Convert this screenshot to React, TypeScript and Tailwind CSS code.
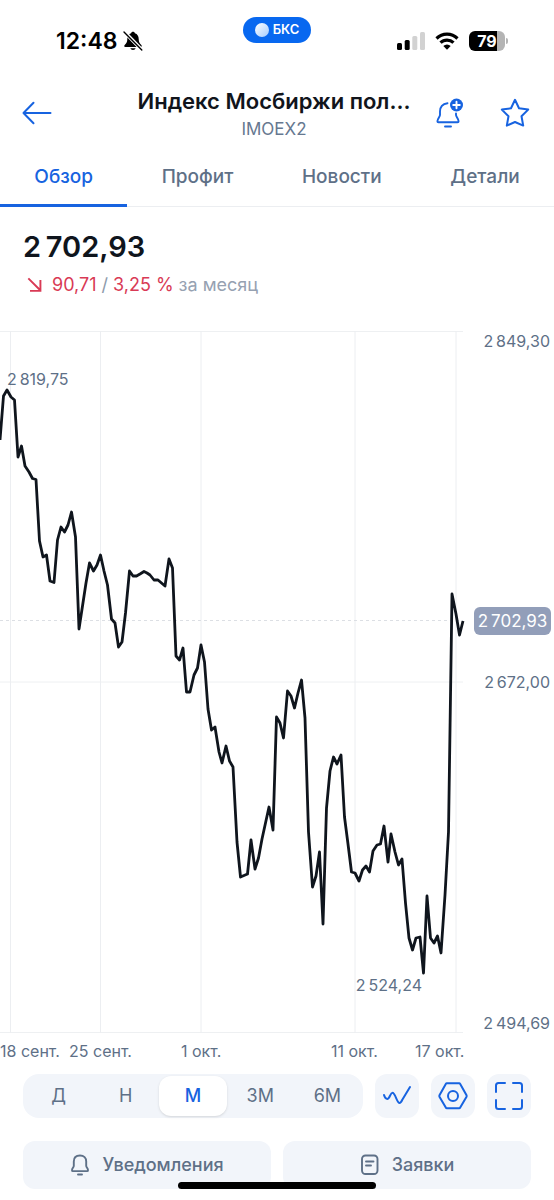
import { useState } from "react";
import { clsx } from "clsx";

const tabs = ["Обзор", "Профит", "Новости", "Детали"];
const ranges = ["Д", "Н", "М", "3М", "6М"];
const gridX = [10.5, 100.5, 201, 355, 456];

const points: [number, number][] = [
    [0, 109], [3.5, 65], [7, 59], [11, 66], [14.5, 69], [18, 126], [21.5, 115], [25, 135], [29, 141], [32.5, 147.5],
    [36, 148.5], [39.5, 210], [43, 226], [46.5, 224], [50, 250], [54, 251.5], [57.5, 209], [61, 196], [64.5, 201],
    [68, 194], [71.5, 181], [75.5, 206], [79, 298], [82.5, 275], [86, 252], [89.5, 232], [93.5, 240], [97, 234],
    [100.5, 224], [104, 240], [107.5, 254], [111.5, 288], [115, 292], [118.5, 316], [122, 311], [125.5, 282],
    [129.5, 240], [133, 245], [136.5, 245], [140, 243], [144, 240.5], [147, 242], [150, 244], [154, 249], [158, 249],
    [165, 255], [169, 228], [172.5, 237], [176, 325], [179.5, 329], [183, 317], [186.5, 361], [190, 361], [194, 344],
    [197.5, 337], [201, 314], [204.5, 331], [208, 378], [211.5, 399], [215, 396], [219, 421], [222, 432], [226, 415],
    [229.5, 430], [233, 436], [237, 511], [240.5, 546], [247.5, 543], [251, 509], [255, 538], [258.5, 527],
    [262, 508], [265.5, 492], [269, 476], [273, 499], [276.5, 386], [280, 392], [283.5, 407], [287.5, 360],
    [291, 365], [294.5, 377], [298, 362], [301.5, 349], [305, 387], [308.5, 501], [312.5, 556], [316, 545],
    [319.5, 521], [323, 593], [326.5, 477], [330, 440], [333.5, 426], [337, 433], [341, 424], [344.5, 486],
    [348, 513], [351.5, 541], [355, 542], [359, 550], [362.5, 539], [366, 535], [369.5, 541], [373, 520], [377, 514],
    [380.5, 513], [384, 495], [388, 531], [391, 503], [395, 521], [398.5, 534], [402, 528], [405.5, 572], [409, 607],
    [412.5, 619], [416, 607], [420, 606], [423.5, 642], [427, 565], [430.5, 607], [434, 612], [437.5, 605],
    [441, 622], [445, 564], [448.5, 501], [452, 263], [456, 283], [459.5, 304], [463, 290],
];

function StatusBar() {
    return (
        <div className="grid grid-cols-3 px-8 pt-[17px] text-black">
            <div className="flex items-center gap-[6px] pl-6 h-12">
                <span className="text-[23px] leading-6 font-semibold">12:48</span>
                <svg viewBox="0 0 20 20" className="w-5 h-5 shrink-0" aria-hidden="true">
                    <path d="M10 .8c-1 0-1.700.6-1.900 1.400C5.500 3 4.300 5.200 4.300 8c0 3.200-.9 4.300-2.600 6-.9 1-.5 2 .7 2h15.200c1.200 0 1.600-1 .7-2-1.700-1.700-2.600-2.800-2.600-6 0-2.800-1.200-5-3.800-5.800C11.700 1.400 11 .8 10 .8ZM7.300 17.300a2.800 2.300 0 0 0 5.400 0Z" fill="currentColor" />
                    <path d="M1.500 1 19 19" stroke="#fff" strokeWidth="3.600" />
                    <path d="M1 1 18.800 19" stroke="currentColor" strokeWidth="1.400" strokeLinecap="round" />
                </svg>
            </div>
            <div className="flex justify-center items-start">
                <div className="flex items-center justify-center gap-1 h-[26px] w-[68px] rounded-full bg-[#0868f0] text-white">
                    <span className="w-[14px] h-[14px] rounded-full bg-linear-to-br from-white to-[#a5ccff]" />
                    <span className="text-[13px] font-semibold">БКС</span>
                </div>
            </div>
            <div className="flex items-center justify-end gap-[10px] pr-[14px] h-12">
                <svg viewBox="0 0 28 18" className="w-7 h-[18px]" aria-hidden="true">
                    <rect x="0" y="11" width="5" height="7" rx="1.500" />
                    <rect x="7.700" y="8" width="5" height="10" rx="1.500" />
                    <rect x="15.300" y="4" width="5" height="14" rx="1.500" fill="#d2d2d2" />
                    <rect x="23" y="0" width="5" height="18" rx="1.500" fill="#d2d2d2" />
                </svg>
                <svg viewBox="0 0 24 18" className="w-6 h-[18px]" fill="none" stroke="currentColor" strokeWidth="3.200" aria-hidden="true">
                    <path d="M1.500 6.500a15 15 0 0 1 21 0" />
                    <path d="M5.500 10.700a9.300 9.300 0 0 1 13 0" />
                    <path d="M8.300 14a5.300 5.300 0 0 1 7.400 0L12 17.700Z" fill="currentColor" stroke="none" />
                </svg>
                <div className="flex items-center">
                    <span className="flex items-center justify-center w-9 h-5 rounded-md bg-linear-to-r from-black from-78% to-[#b4b4b4] to-78% text-white text-base font-bold">
                        79
                    </span>
                    <span className="w-[2px] h-[6px] ml-px rounded-r-full bg-[#b4b4b4]" />
                </div>
            </div>
        </div>
    );
}

function Header() {
    return (
        <header className="flex items-start pl-[22px] pr-6 pt-[22px]">
            <button aria-label="Назад" className="flex items-center w-[92px] h-[52px] shrink-0 text-[#1763e0]">
                <svg viewBox="0 0 30 24" className="w-[30px] h-6" fill="none" stroke="currentColor" strokeWidth="2" strokeLinecap="round" strokeLinejoin="round">
                    <path d="M28.500 12H1.500M11.500 1.800 1.500 12l10 10.200" />
                </svg>
            </button>
            <div className="flex-1 min-w-0 text-center">
                <h1 className="flex justify-center text-[22px] leading-7 font-semibold text-[#11151c] whitespace-nowrap">
                    Индекс Мосбиржи пол...
                </h1>
                <p className="text-[17px] leading-7 text-[#667890]">IMOEX2</p>
            </div>
            <div className="flex items-center justify-end gap-9 w-24 h-[52px] shrink-0 text-[#1763e0]">
                <button aria-label="Добавить уведомление">
                    <svg viewBox="0 0 28 30" className="w-7 h-[30px]" fill="none" stroke="currentColor" strokeWidth="1.900" strokeLinecap="round" strokeLinejoin="round">
                        <path d="M11.500 5.200C6.600 5.900 4 9 4 13.500v3.600c0 1.700-2.600 4-2.600 6.100 0 .7.400 1 1 1h19.200c.6 0 1-.3 1-1 0-2.100-2.600-4.400-2.600-6.100V15.500M9 28.500h6" />
                        <circle cx="20.500" cy="7" r="6.500" fill="currentColor" stroke="none" />
                        <path d="M20.500 3.700v6.600M17.200 7h6.600" stroke="#fff" />
                    </svg>
                </button>
                <button aria-label="В избранное">
                    <svg viewBox="0 0 30 30" className="w-[30px] h-[30px]" fill="none" stroke="currentColor" strokeWidth="2" strokeLinejoin="round">
                        <path d="m15 1.800 4 8.500 9.200 1.300-6.700 6.600 1.700 9.400-8.200-3.600-8.200 3.600 1.700-9.400-6.700-6.600L11 10.300Z" />
                    </svg>
                </button>
            </div>
        </header>
    );
}

function Chart() {
    return (
        <section className="mt-8 text-[#5e7087]">
            <div className="flex">
                <div className="relative flex-1 min-w-0">
                    <svg viewBox="0 0 463 702" className="block w-full h-auto overflow-visible" fill="none">
                        <path d="M0 .5H463M0 351H463M0 701.500H463" stroke="#eef0f2" />
                        {gridX.map((x) => (
                            <path key={x} d={`M${x} 0V702`} stroke="#eceef1" />
                        ))}
                        <path d="M0 289.500H463" stroke="#dcdfe4" strokeDasharray="3 3" />
                        <polyline points={points.map((p) => p.join(",")).join(" ")} stroke="#0f151d" strokeWidth="2.800" strokeLinejoin="round" />
                    </svg>
                    <span className="absolute left-[7px] top-[5%] mt-[3px] text-base leading-5">2&#8201;819,75</span>
                    <span className="absolute right-[41px] bottom-[38px] text-base leading-5">2&#8201;524,24</span>
                </div>
                <div className="relative flex flex-col justify-between items-end w-[91px] pr-1 text-base leading-5">
                    <span>2&#8201;849,30</span>
                    <span>2&#8201;672,00</span>
                    <span>2&#8201;494,69</span>
                    <span className="absolute right-[3px] top-[41.3%] flex items-center justify-center w-[77px] h-7 -mt-[14px] rounded-md bg-[#929eb9] text-[17px] text-white whitespace-nowrap">
                        2&#8201;702,93
                    </span>
                </div>
            </div>
            <div className="grid grid-cols-[69fr_112fr_150fr_84fr_139fr] mt-2 text-base leading-5 whitespace-nowrap">
                <span>18 сент.</span>
                <span>25 сент.</span>
                <span>1 окт.</span>
                <span>11 окт.</span>
                <span>17 окт.</span>
            </div>
        </section>
    );
}

export default function App() {
    const [tab, setTab] = useState("Обзор");
    const [range, setRange] = useState("М");
    const tool = "flex items-center justify-center w-[44px] h-[44px] rounded-xl bg-[#f2f5fa] text-[#1763e0]";
    const action = "flex flex-1 items-center justify-center gap-3 h-12 rounded-xl bg-[#f2f5fa] text-lg font-medium";

    return (
        <main className="relative min-h-screen bg-white font-['Inter','Liberation_Sans',sans-serif] text-[#5e7087]">
            <StatusBar />
            <Header />

            <nav className="flex mt-3 border-b border-[#eceef1]">
                {tabs.map((name) => (
                    <button
                        key={name}
                        onClick={() => setTab(name)}
                        className={clsx(
                            "flex-auto h-[52px] pb-1 -mb-px text-[19px] font-medium border-b-[3px]",
                            name === tab ? "text-[#1763e0] border-[#1763e0]" : "border-transparent"
                        )}
                    >
                        {name}
                    </button>
                ))}
            </nav>

            <section className="px-[23px] pt-6">
                <p className="text-[29px] leading-8 font-semibold text-[#0f151d]">2&#8201;702,93</p>
                <p className="flex items-center mt-2 gap-[5px] text-lg leading-7 text-[#d93a55]">
                    <svg viewBox="0 0 24 24" className="w-6 h-5" fill="none" stroke="currentColor" strokeWidth="2.300" aria-hidden="true">
                        <path d="m4 4 14 14M18.500 6v13H6" />
                    </svg>
                    <span>90,71</span>
                    <span className="text-[#8d9aab]">/</span>
                    <span>3,25 %</span>
                    <span className="text-[#96a1b1]">за месяц</span>
                </p>
            </section>

            <Chart />

            <div className="flex gap-3 mt-[13px] px-[23px]">
                <div className="flex flex-1 p-[2px] rounded-2xl bg-[#f2f5fa]">
                    {ranges.map((r) => (
                        <button
                            key={r}
                            onClick={() => setRange(r)}
                            className={clsx(
                                "flex-1 h-10 rounded-xl text-lg",
                                r === range && "bg-white text-[#1763e0] font-medium shadow-sm"
                            )}
                        >
                            {r}
                        </button>
                    ))}
                </div>
                <button aria-label="Тип графика" className={tool}>
                    <svg viewBox="0 0 30 30" className="w-[30px] h-[30px]" fill="none" stroke="currentColor" strokeWidth="2" strokeLinecap="round" strokeLinejoin="round">
                        <path d="M2 14c.8 2.800 1.700 3.900 3.300 3.900 2.400 0 3-6.100 5.200-6.100 2.600 0 4.600 10.200 7 10.200 1.200 0 2-1.500 2.800-3.200L28 6" />
                    </svg>
                </button>
                <button aria-label="Настройки" className={tool}>
                    <svg viewBox="0 0 30 30" className="w-[30px] h-[30px]" fill="none" stroke="currentColor" strokeWidth="2" strokeLinejoin="round">
                        <path d="M8.800 2.300h12.400q.6 0 1 .7l6.200 11q.5 1 0 2l-6.200 10.500q-.4.800-1 .8H8.800q-.6 0-1-.8L1.600 16q-.5-1 0-2l6.200-11q.4-.7 1-.7Z" />
                        <circle cx="15" cy="15" r="5" />
                    </svg>
                </button>
                <button aria-label="На весь экран" className={tool}>
                    <svg viewBox="0 0 30 30" className="w-[30px] h-[30px]" fill="none" stroke="currentColor" strokeWidth="2" strokeLinecap="round" strokeLinejoin="round">
                        <path d="M2 11V4.500A2.500 2.500 0 0 1 4.500 2H11M19 2h6.500A2.500 2.500 0 0 1 28 4.500V11M28 19v6.500a2.500 2.500 0 0 1-2.500 2.500H19M11 28H4.500A2.500 2.500 0 0 1 2 25.500V19" />
                    </svg>
                </button>
            </div>

            <div className="flex gap-3 mt-[23px] px-[23px] pb-2">
                <button className={action}>
                    <svg viewBox="0 0 20 22" className="w-5 h-[22px]" fill="none" stroke="currentColor" strokeWidth="1.900" strokeLinecap="round" strokeLinejoin="round" aria-hidden="true">
                        <path d="M10 1.500c-4 0-6.200 2.500-6.200 6v4.200c0 1.500-1.800 2.800-1.800 4.500 0 .7.300.9.900.9h14.200c.6 0 .9-.2.900-.9 0-1.700-1.800-3-1.800-4.500V7.500c0-3.500-2.200-6-6.200-6ZM8 20.500h4" />
                    </svg>
                    Уведомления
                </button>
                <button className={action}>
                    <svg viewBox="0 0 20 22" className="w-5 h-[22px]" fill="none" stroke="currentColor" strokeWidth="1.900" strokeLinecap="round" aria-hidden="true">
                        <rect x="2" y="1.500" width="15.500" height="18.500" rx="3.500" />
                        <path d="M6 7.500h7.500M6 11.500h5" />
                    </svg>
                    Заявки
                </button>
            </div>

            <div className="absolute bottom-[11px] left-1/2 -translate-x-1/2 w-[198px] h-[7px] rounded-full bg-black" />
        </main>
    );
}
